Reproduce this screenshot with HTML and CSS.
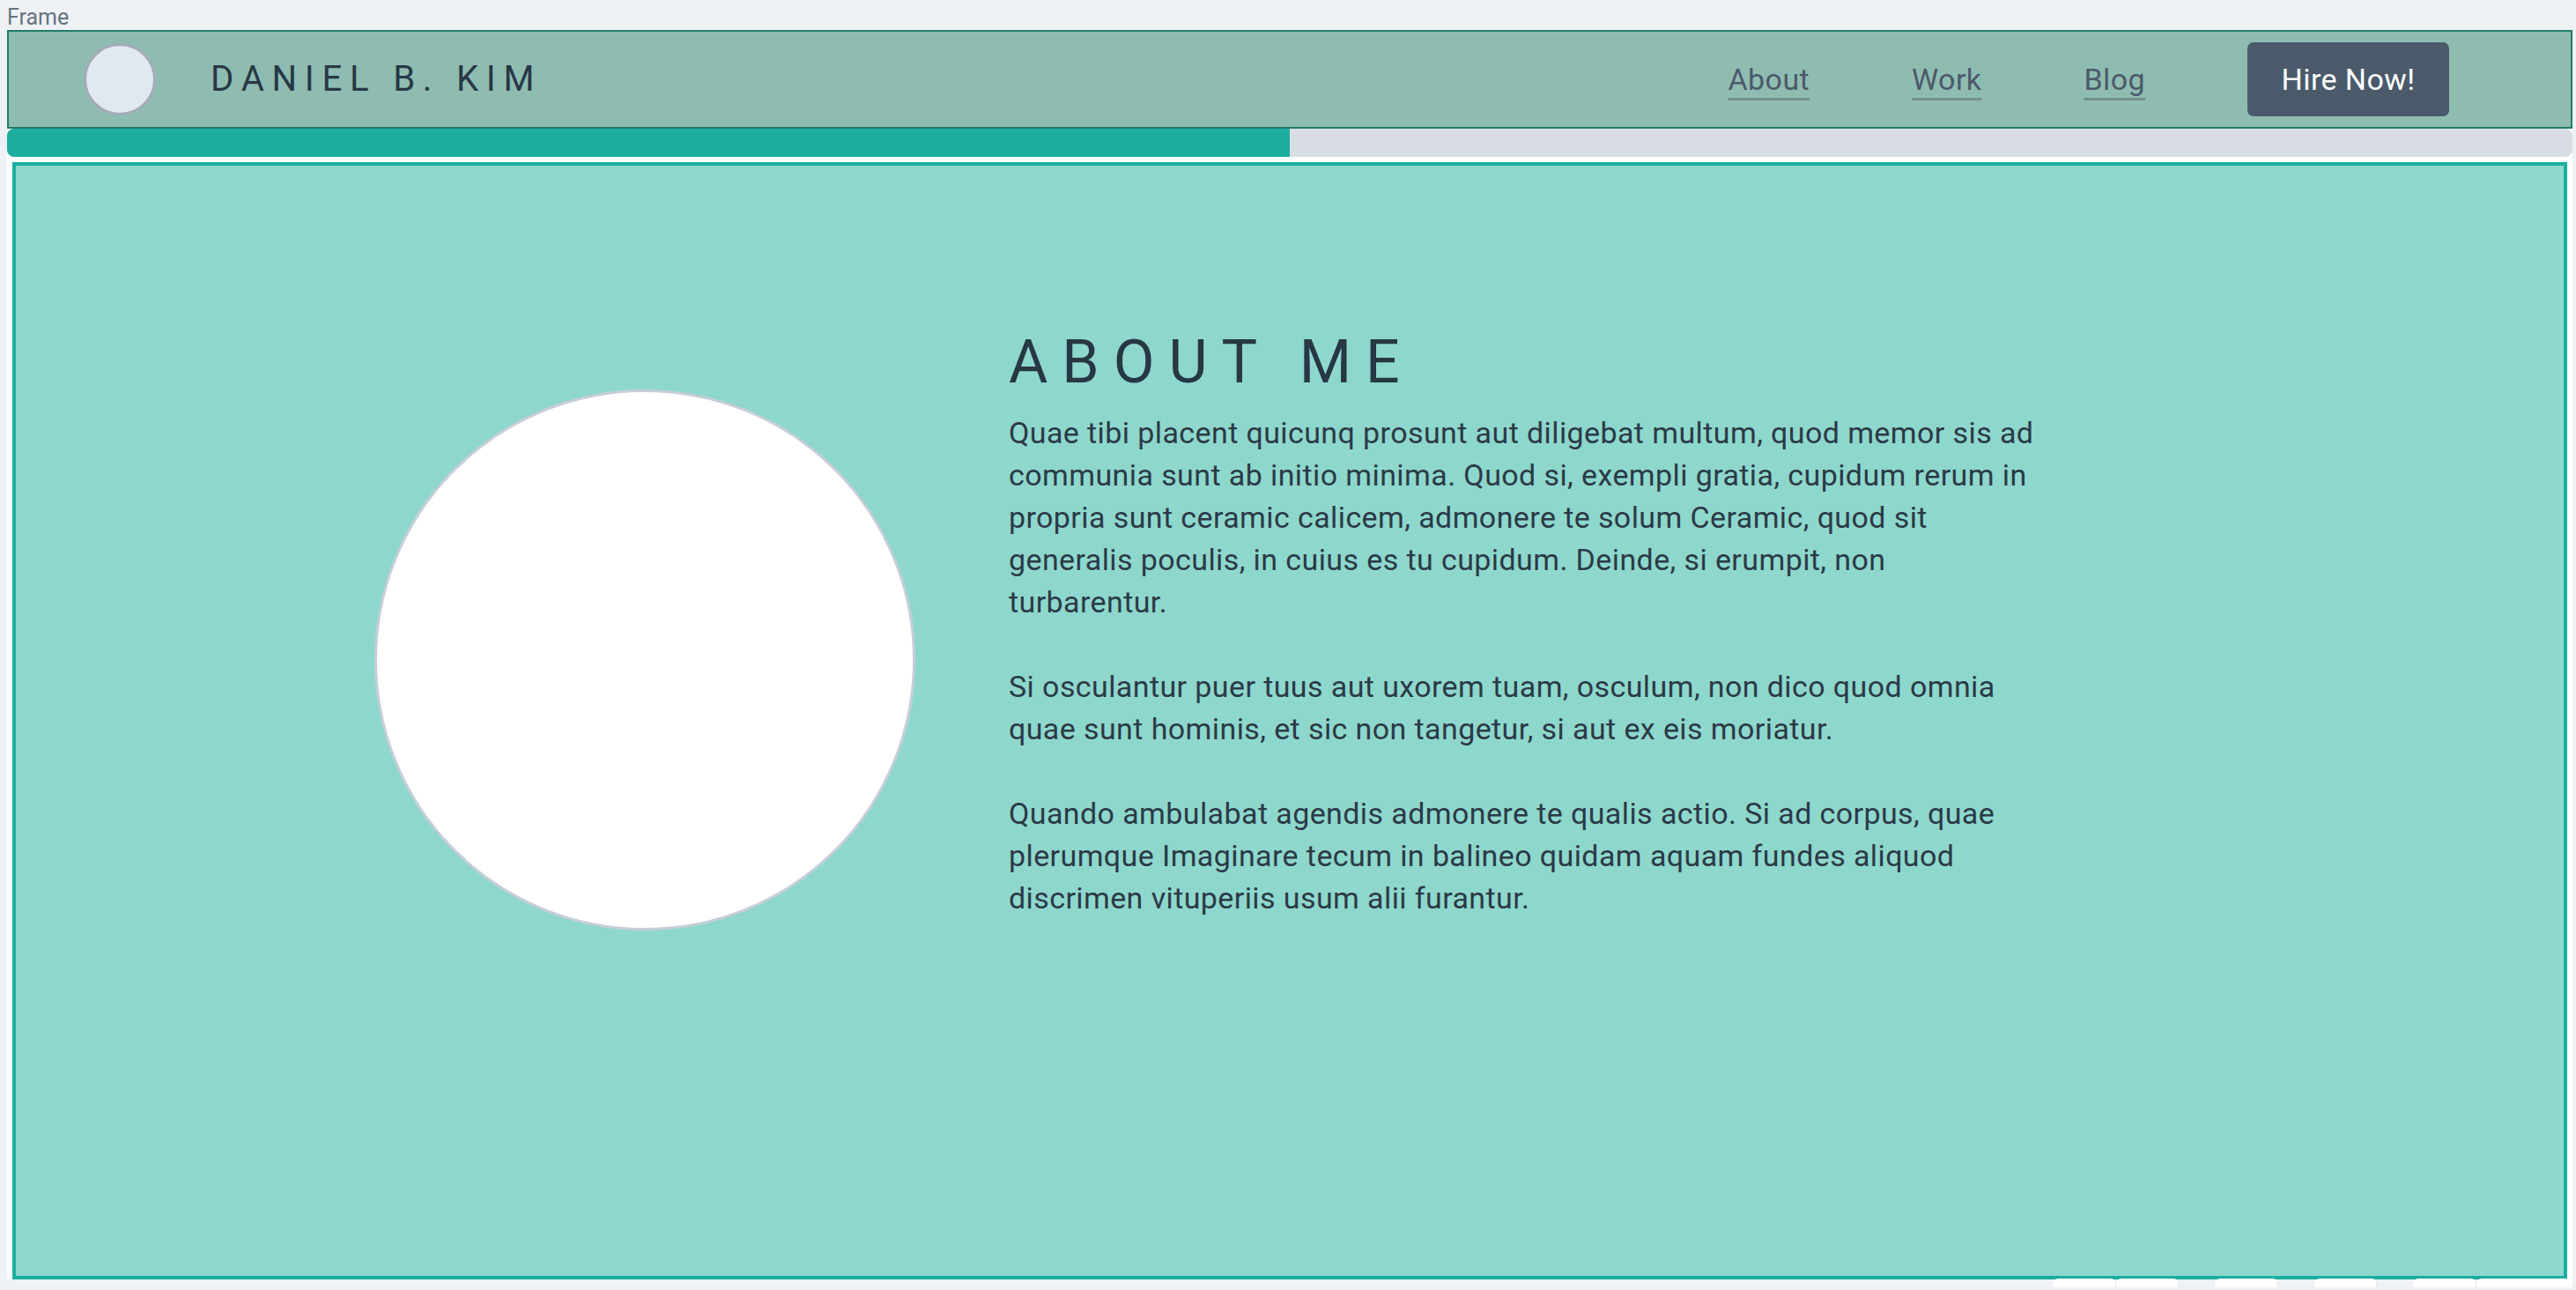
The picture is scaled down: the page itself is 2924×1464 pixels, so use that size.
FILE: index.html
```html
<!DOCTYPE html>
<html lang="en">
<head>
<meta charset="utf-8">
<title>Daniel B. Kim</title>
<link rel="stylesheet" href="styles.css">
</head>
<body>
  <div class="frame-label">Frame</div>
  <div class="frame">
    <header class="navbar">
      <div class="brand">
        <span class="avatar"></span>
        <span class="brand-name">DANIEL B. KIM</span>
      </div>
      <nav class="nav">
        <a class="nav-link" href="#about">About</a>
        <a class="nav-link" href="#work">Work</a>
        <a class="nav-link" href="#blog">Blog</a>
        <a class="btn-hire" href="#hire">Hire Now!</a>
      </nav>
    </header>
    <div class="progress"><div class="progress-fill" style="width: 50%"></div></div>
    <main class="about" id="about">
      <div class="about-row">
        <div class="photo"></div>
        <div class="about-text">
          <h2 class="about-title">ABOUT ME</h2>
          <p class="about-p">Quae tibi placent quicunq prosunt aut diligebat multum, quod memor sis ad communia sunt ab initio minima. Quod si, exempli gratia, cupidum rerum in propria sunt ceramic calicem, admonere te solum Ceramic, quod sit generalis poculis, in cuius es tu cupidum. Deinde, si erumpit, non turbarentur.</p>
          <p class="about-p">Si osculantur puer tuus aut uxorem tuam, osculum, non dico quod omnia quae sunt hominis, et sic non tangetur, si aut ex eis moriatur.</p>
          <p class="about-p">Quando ambulabat agendis admonere te qualis actio. Si ad corpus, quae plerumque Imaginare tecum in balineo quidam aquam fundes aliquod discrimen vituperiis usum alii furantur.</p>
        </div>
      </div>
    </main>
  </div>
  <div class="peek">
    <span class="peek-tab"></span><span class="peek-tab"></span>
    <span class="peek-gap"></span>
    <span class="peek-tab"></span>
    <span class="peek-gap"></span>
    <span class="peek-tab"></span>
    <span class="peek-gap"></span>
    <span class="peek-tab"></span><span class="peek-tab wide"></span>
  </div>
</body>
</html>
```

FILE: styles.css
```css
* {
  box-sizing: border-box;
}

html, body {
  background: #eef2f5;
}

body {
  margin: 8px 4px 0 8px;
  font-family: Roboto, "Liberation Sans", sans-serif;
  color: #2b3a47;
}

.frame-label {
  font-size: 25px;
  line-height: 24px;
  height: 26px;
  color: #66737f;
}

.frame {
  background: #ffffff;
}

.navbar {
  height: 112px;
  border: 2px solid #237a6b;
  background: #8fbcb1;
  display: flex;
  align-items: center;
  justify-content: space-between;
  padding: 0 138px 0 85px;
}

.brand {
  display: flex;
  align-items: center;
  gap: 62px;
}

.avatar {
  width: 82px;
  height: 82px;
  border-radius: 50%;
  background: #e2e8f0;
  border: 3px solid #a3abb8;
}

.brand-name {
  font-size: 40px;
  letter-spacing: 8.8px;
  color: #283845;
  line-height: 1;
}

.nav {
  display: flex;
  align-items: center;
  gap: 116px;
}

.nav-link {
  font-size: 34px;
  letter-spacing: 0.4px;
  color: #4b5a6a;
  text-decoration: underline;
  text-decoration-color: #74918e;
  text-decoration-thickness: 3px;
  text-underline-offset: 9px;
  line-height: 1;
}

.btn-hire {
  display: flex;
  align-items: center;
  justify-content: center;
  width: 229px;
  height: 84px;
  border-radius: 7px;
  background: #4a5a6b;
  color: #ffffff;
  font-size: 34px;
  letter-spacing: 0.4px;
  text-decoration: none;
}

.progress {
  height: 32px;
  background: #d9dee5;
  border-radius: 8px;
  overflow: hidden;
}

.progress-fill {
  height: 100%;
  background: #1bae9f;
}

.about {
  margin: 6px 6px 0 6px;
  height: 1268px;
  border: 4px solid #1aae9f;
  background: #8ed7cd;
  padding: 182px 0 0 407px;
}

.about-row {
  display: flex;
  align-items: flex-start;
  gap: 106px;
}

.photo {
  flex: none;
  width: 614px;
  height: 614px;
  margin-top: 72px;
  border-radius: 50%;
  background: #ffffff;
  border: 3px solid #c7ced8;
}

.about-text {
  width: 1176px;
}

.about-title {
  margin: 0 0 15px 0;
  font-size: 68px;
  line-height: 82px;
  font-weight: 400;
  letter-spacing: 16px;
  color: #273744;
}

.about-p {
  margin: 0 0 48px 0;
  font-size: 34px;
  line-height: 48px;
  letter-spacing: 0.4px;
  color: #2b3a47;
}

.peek {
  display: flex;
  margin-top: -1px;
  padding-left: 2322px;
  height: 10px;
}

.peek-tab {
  width: 72px;
  height: 10px;
  background: #ffffff;
  border-radius: 6px 6px 0 0;
  border-right: 1px solid #e6eaee;
}

.peek-tab.wide {
  width: 110px;
  border-right: none;
  border-radius: 6px 0 0 0;
}

.peek-gap {
  width: 41px;
}
```
